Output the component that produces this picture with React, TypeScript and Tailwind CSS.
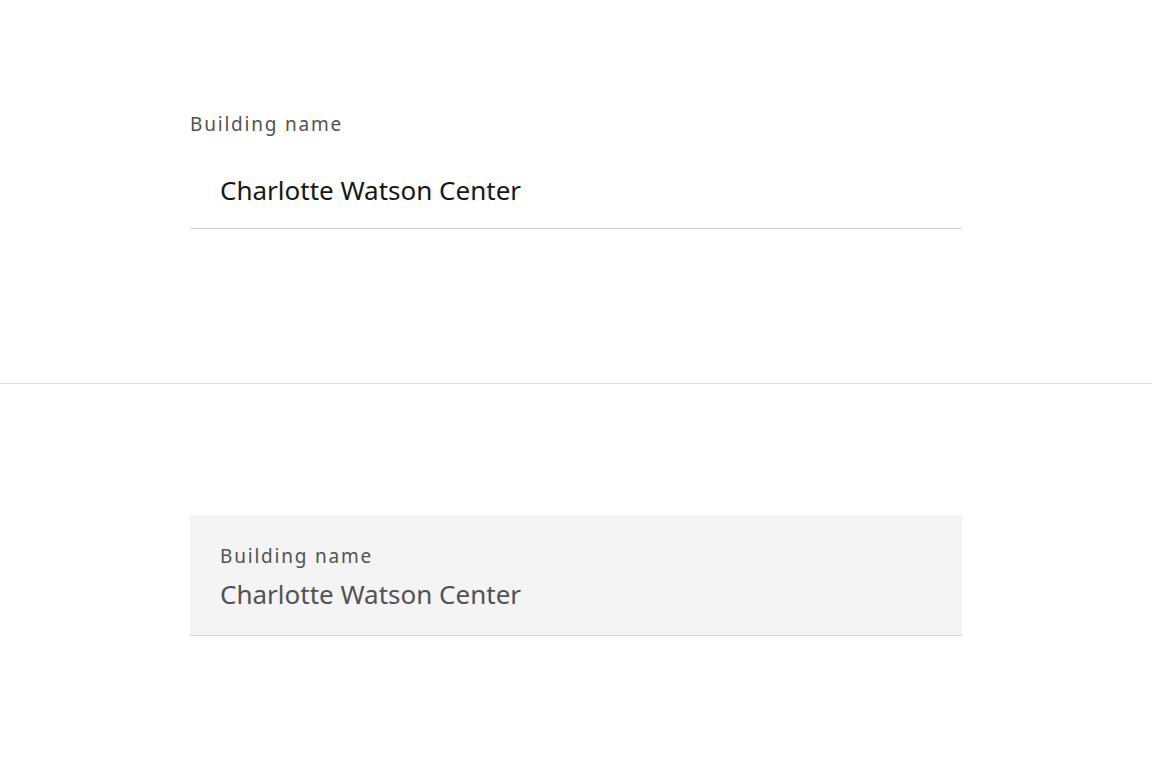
export default function App() {
  const font = { fontFamily: '"Noto Sans", "Liberation Sans", sans-serif' };
  return (
    <div className="w-[1152px] h-[767px] bg-white flex flex-col" style={font}>
      <div className="h-[384px] border-b border-[#e0e0e0] pt-[108px] pl-[190px]">
        <div className="w-[772px]">
          <div className="text-[19px] leading-[32px] text-[#525252] tracking-[1.8px]">Building name</div>
          <div className="h-[79px] mt-[10px] pl-[30px] flex items-center border-b border-[#d0d0d0]">
            <span className="text-[26px] leading-[36px] text-[#161616] pt-[2px]">Charlotte Watson Center</span>
          </div>
        </div>
      </div>
      <div className="pt-[131px] pl-[190px]">
        <div className="w-[772px] h-[121px] bg-[#f4f4f4] border-b border-[#d6d6d6] pl-[30px] pt-[26px]">
          <div className="text-[19px] leading-[30px] text-[#525252] tracking-[1.8px]">Building name</div>
          <div className="text-[26px] leading-[38px] mt-[4px] text-[#525252]">Charlotte Watson Center</div>
        </div>
      </div>
    </div>
  );
}
